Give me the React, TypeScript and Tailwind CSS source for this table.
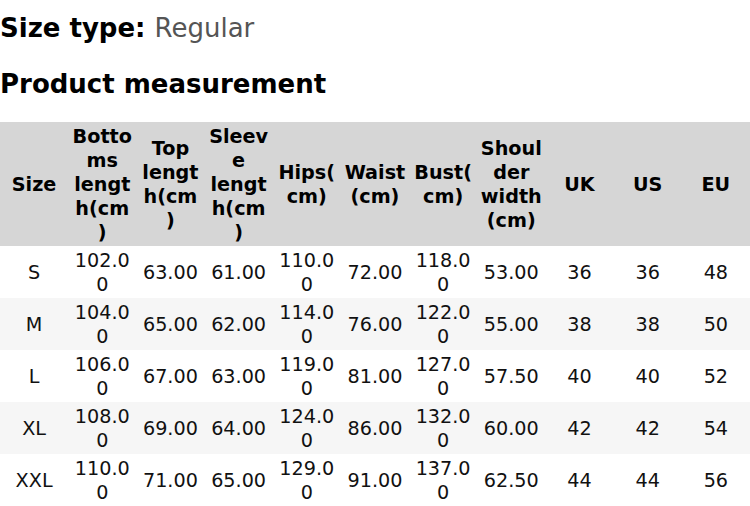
import React from "react";

const headers = [
    "Size",
    "Bottoms length(cm)",
    "Top length(cm)",
    "Sleeve length(cm)",
    "Hips(cm)",
    "Waist (cm)",
    "Bust(cm)",
    "Shoulder width (cm)",
    "UK",
    "US",
    "EU",
];

const rows = [
    ["S", "102.00", "63.00", "61.00", "110.00", "72.00", "118.00", "53.00", "36", "36", "48"],
    ["M", "104.00", "65.00", "62.00", "114.00", "76.00", "122.00", "55.00", "38", "38", "50"],
    ["L", "106.00", "67.00", "63.00", "119.00", "81.00", "127.00", "57.50", "40", "40", "52"],
    ["XL", "108.00", "69.00", "64.00", "124.00", "86.00", "132.00", "60.00", "42", "42", "54"],
    ["XXL", "110.00", "71.00", "65.00", "129.00", "91.00", "137.00", "62.50", "44", "44", "56"],
];

const App: React.FC = () => {
    return (
        <div className="w-[750px] h-[506px] overflow-hidden bg-white text-black font-['DejaVu_Sans',sans-serif]">
            <div className="pt-[13px] text-[26px] leading-[30px]">
                <span className="font-bold">Size type: </span>
                <span className="text-[#555555]">Regular</span>
            </div>
            <div className="mt-[26px] text-[26px] leading-[30px] font-bold">Product measurement</div>

            <table className="mt-[23px] w-full table-fixed border-collapse text-[19.2px] leading-[24px] text-center">
                <thead>
                    <tr className="bg-[#d6d6d6]">
                        {headers.map((h) => (
                            <th key={h} className="px-[3px] pt-[3px] pb-[1px] align-middle font-bold [overflow-wrap:anywhere]">
                                {h}
                            </th>
                        ))}
                    </tr>
                </thead>
                <tbody>
                    {rows.map((row, i) => (
                        <tr key={row[0]} className={i % 2 === 1 ? "bg-[#f6f6f6]" : "bg-white"}>
                            {row.map((cell, j) => (
                                <td key={j} className="px-[3px] pt-[3px] pb-[1px] align-middle text-[#111111] [overflow-wrap:anywhere]">
                                    {cell}
                                </td>
                            ))}
                        </tr>
                    ))}
                </tbody>
            </table>
        </div>
    );
};

export default App;
